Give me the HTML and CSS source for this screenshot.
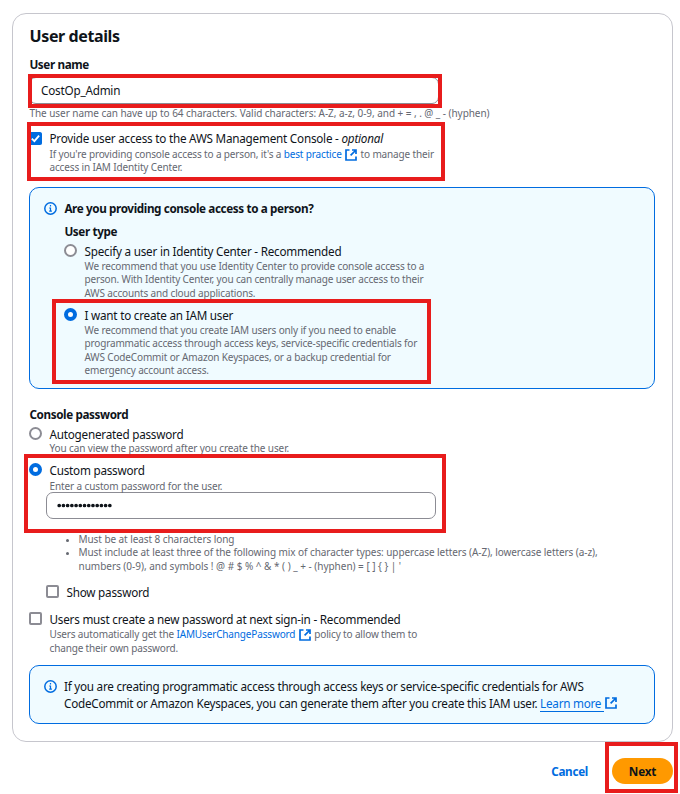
FILE: index.html
```html
<!DOCTYPE html>
<html lang="en">
<head>
<meta charset="utf-8">
<title>User details</title>
<link rel="stylesheet" href="styles.css">
</head>
<body>
<svg width="0" height="0" class="defs" aria-hidden="true">
  <symbol id="external" viewBox="0 0 12 12"><path d="M4.5 1H1v10h10V7.6M7 1h4v4M11 1 5.6 6.4" fill="none" stroke="currentColor" stroke-width="1.7"/></symbol>
  <symbol id="info" viewBox="0 0 13 13"><circle cx="6.5" cy="6.5" r="5.7" fill="none" stroke="currentColor" stroke-width="1.5"/><path d="M6.5 3.1v1.4M5.2 6h1.3v3.2M5.2 9.2h2.7" fill="none" stroke="currentColor" stroke-width="1.2"/></symbol>
</svg>
<main class="card">
  <h2 class="title">User details</h2>
  <div class="label name-label">User name</div>
  <div class="mark-host">
    <input class="field name-field" type="text" value="CostOp_Admin">
    <div class="mark mark-name"></div>
  </div>
  <p class="hint name-hint">The user name can have up to 64 characters. Valid characters: A-Z, a-z, 0-9, and + = , . @ _ - (hyphen)</p>

  <div class="option console-access">
    <span class="check checked"><svg viewBox="0 0 13 13"><path d="m2.8 6.7 2.6 2.5 4.7-5.6" fill="none" stroke="#fff" stroke-width="1.8"/></svg></span>
    <div>
      <div class="text">Provide user access to the AWS Management Console - <em>optional</em></div>
      <p class="hint">If you're providing console access to a person, it's a <a>best practice <svg class="ext"><use href="#external"/></svg></a> to manage their<br>access in IAM Identity Center.</p>
    </div>
    <div class="mark mark-console"></div>
  </div>

  <section class="alert person">
    <svg class="info"><use href="#info"/></svg>
    <div>
      <div class="label question">Are you providing console access to a person?</div>
      <div class="label type">User type</div>
      <div class="option center-user">
        <span class="radio"></span>
        <div>
          <div class="text">Specify a user in Identity Center - Recommended</div>
          <p class="hint">We recommend that you use Identity Center to provide console access to a<br>person. With Identity Center, you can centrally manage user access to their<br>AWS accounts and cloud applications.</p>
        </div>
      </div>
      <div class="option iam-user">
        <span class="radio on"></span>
        <div>
          <div class="text">I want to create an IAM user</div>
          <p class="hint">We recommend that you create IAM users only if you need to enable<br>programmatic access through access keys, service-specific credentials for<br>AWS CodeCommit or Amazon Keyspaces, or a backup credential for<br>emergency account access.</p>
        </div>
        <div class="mark mark-iam"></div>
      </div>
    </div>
  </section>

  <div class="label pw-label">Console password</div>
  <div class="option auto">
    <span class="radio"></span>
    <div>
      <div class="text">Autogenerated password</div>
      <p class="hint">You can view the password after you create the user.</p>
    </div>
  </div>
  <div class="option custom">
    <span class="radio on"></span>
    <div>
      <div class="text">Custom password</div>
      <p class="hint">Enter a custom password for the user.</p>
    </div>
    <div class="mark mark-custom"></div>
  </div>
  <div class="field pw-field"><svg viewBox="0 0 56 6"><path d="M2.2 3.5h52" stroke="#0f141a" stroke-width="3.7" stroke-linecap="round" stroke-dasharray="0 4.22"/></svg></div>
  <ul class="hint rules">
    <li>Must be at least 8 characters long</li>
    <li>Must include at least three of the following mix of character types: uppercase letters (A-Z), lowercase letters (a-z),<br><span class="symbols">numbers (0-9), and symbols ! @ # $ % ^ &amp; * ( ) _ + - (hyphen) = [ ] { } | '</span></li>
  </ul>
  <div class="option show"><span class="check"></span><div class="text">Show password</div></div>
  <div class="option change">
    <span class="check"></span>
    <div>
      <div class="text">Users must create a new password at next sign-in - Recommended</div>
      <p class="hint">Users automatically get the <a>IAMUserChangePassword <svg class="ext"><use href="#external"/></svg></a> policy to allow them to<br>change their own password.</p>
    </div>
  </div>
  <section class="alert access">
    <svg class="info"><use href="#info"/></svg>
    <div class="text">If you are creating programmatic access through access keys or service-specific credentials for AWS<br>CodeCommit or Amazon Keyspaces, you can generate them after you create this IAM user. <a><span class="under">Learn more </span><svg class="ext"><use href="#external"/></svg></a></div>
  </section>
</main>
<footer class="actions">
  <a class="cancel">Cancel</a>
  <div class="mark-host"><button class="next">Next</button><div class="mark mark-next"></div></div>
</footer>
</body>
</html>
```
FILE: styles.css
```css
* { box-sizing: border-box; }
body { margin: 0; width: 680px; height: 794px; overflow: hidden; background: #fff; color: #0f141a; font-family: "Noto Sans", "Open Sans", sans-serif; font-size: 12px; padding: 13px 7px 0 12px; }
.defs { position: absolute; }
p, h2, ul { margin: 0; padding: 0; }
.card { height: 729px; border: 1px solid #c6c6cd; border-radius: 14px; padding: 12px 17px 0 16px; white-space: nowrap; }
.title { font-size: 16px; line-height: 20px; font-weight: 700; letter-spacing: -.4px; padding-left: .6px; }
.label { font-size: 11.7px; line-height: 18px; font-weight: 700; letter-spacing: -.38px; padding-left: .4px; }
.text { font-size: 11.7px; line-height: 18px; letter-spacing: -.22px; }
.hint { font-size: 10px; line-height: 13.5px; color: #656871; letter-spacing: -.15px; }
a { color: #006ce0; }
.name-label { margin-top: 9px; }
.mark-host { position: relative; }
.field { display: flex; align-items: center; width: 410px; height: 27px; border: 1px solid #8c8c94; border-radius: 7px; background: #fff; padding: 0 10px; color: #0f141a; font: 11.7px "Noto Sans", sans-serif; letter-spacing: -.2px; }
.name-field { margin-top: 4px; padding: 0 10px 1px 11px; }
.name-hint { margin-top: 3px; letter-spacing: -.05px; padding-left: .4px; }
.option { position: relative; display: flex; gap: 7.5px; }
.option .radio, .option .check { flex: none; margin-top: 2px; width: 13px; height: 13px; border: 2px solid #8c8c94; background: #fff; }
.radio { border-radius: 50%; }
.option .radio.on { border: 4px solid #006ce0; }
.check { border-radius: 2px; }
.option .checked { border: 0; background: #006ce0; }
.checked svg { display: block; width: 13px; height: 13px; }
.ext { width: 12px; height: 12px; vertical-align: -1px; margin-left: 1px; overflow: visible; }
.hint .ext { margin: -3px 1px -2px 1px; vertical-align: -1px; }
.console-access { margin-top: 9px; }
.console-access .text { position: relative; top: -.5px; }
.alert { display: flex; gap: 7px; border: 1px solid #006ce0; border-radius: 10px; background: #f0fbff; }
.info { flex: none; width: 13px; height: 13px; color: #006ce0; }
.person { margin-top: 12px; height: 202px; padding: 11px 14px; }
.person .info { margin-top: 3px; }
.type { margin-top: 5px; }
.center-user { margin-top: 2px; }
.iam-user { margin-top: 6px; }
.iam-user .hint { margin-top: -.5px; }
.pw-label { margin-top: 16px; }
.auto { margin-top: 2px; }
.auto .hint { letter-spacing: -.11px; margin-top: -1px; }
.custom { margin-top: 6px; }
.custom .hint { letter-spacing: -.12px; margin-top: .5px; }
.pw-field { width: 390px; margin: -1.5px 0 0 17px; }
.pw-field svg { width: 56px; height: 6px; }
.rules { list-style: none; margin: 14px 0 0 49.5px; letter-spacing: -.07px; }
.symbols { letter-spacing: -.02px; }
.rules li { position: relative; }
.rules li::before { content: ""; position: absolute; left: -13px; top: 6px; width: 3px; height: 3px; border-radius: 50%; background: #656871; }
.show { margin: 10px 0 0 17px; }
.change { margin-top: 9px; }
.access { margin-top: 10px; height: 59px; padding: 12px 14px; }
.access .info { margin-top: 2px; }
.access .text { line-height: 17px; letter-spacing: -.245px; }
.under { border-bottom: 1px solid #006ce0; }
.actions { display: flex; justify-content: flex-end; align-items: center; height: 26px; margin-top: 16px; gap: 24px; }
.cancel { font-size: 11.7px; font-weight: 700; letter-spacing: -.3px; }
.next { display: block; width: 61px; height: 26px; padding: 0; border: 0; border-radius: 13px; background: #ff9900; color: #0f141a; font: 700 11.7px "Noto Sans", sans-serif; letter-spacing: -.2px; }
.mark { position: absolute; border: 4px solid #e81c1c; pointer-events: none; }
.mark-name { left: -1px; top: -3px; width: 414px; height: 34px; }
.mark-console { left: -2px; top: -8px; width: 418px; height: 59px; }
.mark-iam { left: -12px; top: -7px; width: 379px; height: 85px; }
.mark-custom { left: -5px; top: -7px; width: 422px; height: 79px; }
.mark-next { left: -7px; top: -16px; width: 73px; height: 51px; }
```
